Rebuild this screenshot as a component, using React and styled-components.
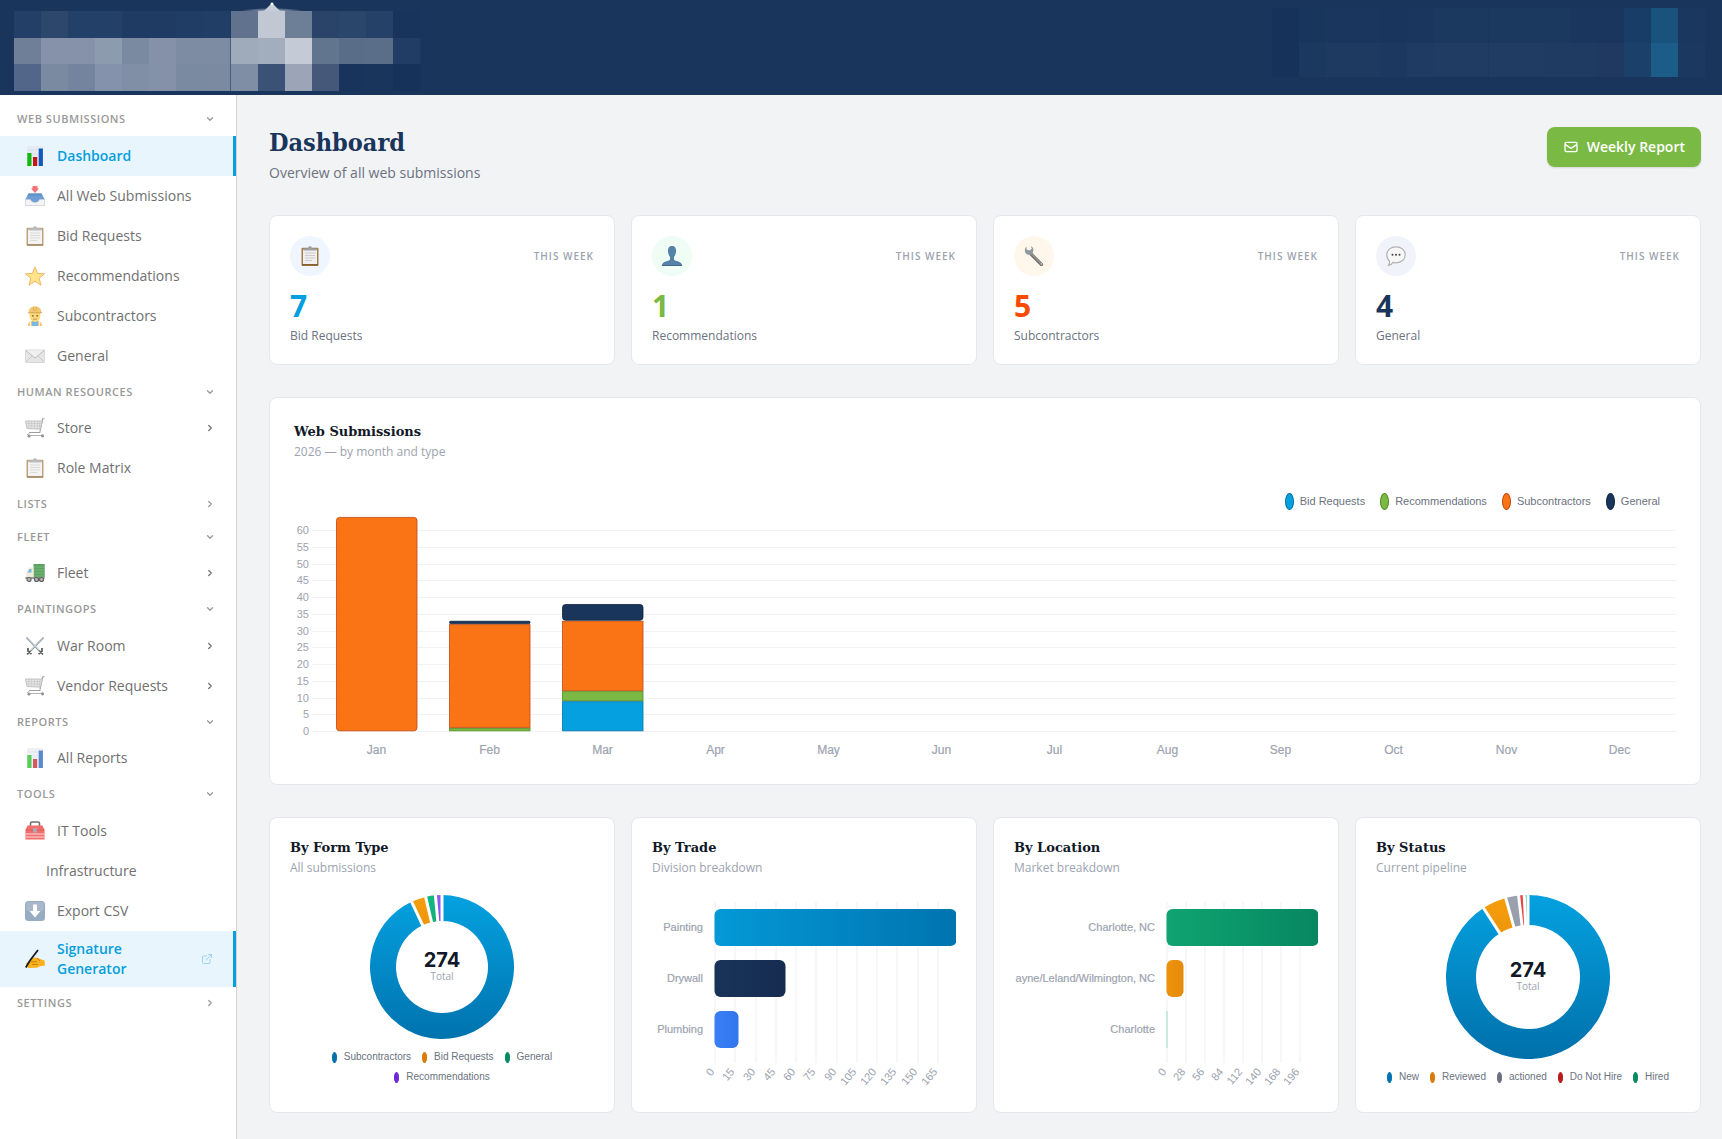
import React from "react";
import styled, { createGlobalStyle, css } from "styled-components";
import { ChevronDown, ChevronRight, ExternalLink } from "lucide-react";

const GlobalStyle = createGlobalStyle`
  :root {
    --navy: #19355c;
    --blue: #00a0df;
    --green: #7ab944;
    --muted: #9ca3af;
    --line: #e5e7eb;
    --sans: "Open Sans", "Noto Sans", sans-serif;
    --chart: "Liberation Sans", Arial, sans-serif;
  }

  *, *::before {
    box-sizing: border-box;
  }

  body {
    margin: 0;
    background: #f2f3f5;
    font-family: var(--sans);
    color: #111827;
  }

  h1, h2, p {
    margin: 0;
  }
`;

const Header = styled.header`
  display: flex;
  justify-content: space-between;
  height: 95px;
  background: var(--navy);
  overflow: hidden;
`;

const Layout = styled.div`
  display: flex;
  min-height: calc(100vh - 95px);
`;

const Sidebar = styled.nav`
  flex: 0 0 237px;
  padding-top: 8px;
  background: #fff;
  border-right: 1px solid #d6d3d0;
`;

const SectionButton = styled.button`
  display: flex;
  align-items: center;
  justify-content: space-between;
  width: 100%;
  padding: 8px 21px 8px 17px;
  border: 0;
  background: none;
  color: #999;
  font-family: inherit;
  font-size: 11px;
  font-weight: 600;
  line-height: 1.5;
  letter-spacing: 0.05em;
  text-transform: uppercase;
`;

const NavLink = styled.a`
  display: flex;
  align-items: center;
  gap: 11px;
  min-height: 40px;
  padding: 8px 18px 8px ${({ $indent }) => ($indent ? 46 : 24)}px;
  border-right: 3px solid transparent;
  color: #707070;
  font-size: 14px;
  line-height: 20px;
  text-decoration: none;

  ${({ $active }) =>
    $active &&
    css`
      background: #e9f5fc;
      border-right-color: #059fdd;
      color: #059fdd;
      font-weight: 600;
    `}
`;

const NavIcon = styled.span`
  display: flex;
  justify-content: center;
  flex: 0 0 22px;
  opacity: ${({ $active }) => ($active ? 1 : 0.7)};
`;

const NavLabel = styled.span`
  flex: 1;
`;

const OpenIcon = styled(ExternalLink)`
  margin-right: 2px;
  color: #9fd4f0;
`;

const Main = styled.main`
  flex: 1;
  min-width: 0;
  padding: 32px 21px 24px 32px;
`;

const PageHead = styled.div`
  display: flex;
  justify-content: space-between;
  align-items: flex-start;
`;

const Title = styled.h1`
  font-family: "DejaVu Serif Condensed", "DejaVu Serif", serif;
  font-size: 25px;
  line-height: 32px;
  color: var(--navy);
`;

const Subtitle = styled.p`
  margin-top: 4px;
  font-size: 14px;
  line-height: 20px;
  color: #6b7280;
`;

const ReportButton = styled.button`
  display: flex;
  align-items: center;
  gap: 8px;
  height: 40px;
  padding: 0 16px;
  border: 0;
  border-radius: 8px;
  background: var(--green);
  box-shadow: 0 1px 2px rgba(0, 0, 0, 0.12);
  color: #fff;
  font-family: inherit;
  font-size: 14px;
  font-weight: 600;
  line-height: 20px;
`;

const CardGrid = styled.section`
  display: grid;
  grid-template-columns: repeat(4, minmax(0, 1fr));
  gap: 16px;
  margin-top: 32px;
`;

const Card = styled.article`
  padding: ${({ $wide }) => ($wide ? 24 : 20)}px;
  background: #fff;
  border: 1px solid var(--line);
  border-radius: 8px;
`;

const WideCard = styled(Card)`
  margin-top: 32px;
`;

const StatTop = styled.div`
  display: flex;
  align-items: center;
  justify-content: space-between;
`;

const StatIcon = styled.span`
  display: flex;
  align-items: center;
  justify-content: center;
  width: 40px;
  height: 40px;
  border-radius: 50%;
  background: ${({ $bg }) => $bg};
`;

const Period = styled.span`
  font-size: 10px;
  font-weight: 600;
  letter-spacing: 1px;
  text-transform: uppercase;
  color: var(--muted);
`;

const StatValue = styled.p`
  margin-top: 14px;
  font-size: 30px;
  font-weight: 700;
  line-height: 32px;
  color: ${({ $color }) => $color};
`;

const StatLabel = styled.p`
  margin-top: 4px;
  font-size: 12px;
  line-height: 20px;
  margin-bottom: -2px;
  color: #6b7280;
`;

const CardTitle = styled.h2`
  font-family: "DejaVu Serif", serif;
  font-size: 13px;
  line-height: 20px;
`;

const CardNote = styled.p`
  font-size: 12px;
  line-height: 20px;
  color: var(--muted);
`;

const Chart = styled.svg`
  display: block;
  width: 100%;
  height: auto;
  font-family: var(--chart);
  font-size: 11px;
  fill: var(--muted);
`;

const SmallChart = styled(Chart)`
  margin-top: 6px;
`;

const DonutChart = styled.svg`
  display: block;
  margin: 17px auto 8px;
`;

const Legend = styled.ul`
  display: flex;
  flex-wrap: wrap;
  justify-content: ${({ $end }) => ($end ? "flex-end" : "center")};
  column-gap: ${({ $end }) => ($end ? 15 : 11)}px;
  margin: ${({ $end }) => ($end ? "29px 16px 0 0" : "0 auto")};
  padding: 0;
  max-width: ${({ $max }) => ($max ? `${$max}px` : "none")};
  list-style: none;
  font-family: var(--chart);
  font-size: ${({ $end }) => ($end ? 11 : 10)}px;
  line-height: 20px;
  color: #6b7280;
`;

const LegendItem = styled.li`
  display: flex;
  align-items: center;
  gap: ${({ $large }) => ($large ? 6 : 7)}px;
  white-space: nowrap;

  &::before {
    content: "";
    width: ${({ $large }) => ($large ? 9 : 5)}px;
    height: ${({ $large }) => ($large ? 17 : 11)}px;
    border: 1px solid ${({ $border, $color }) => $border || $color};
    border-radius: 50%;
    background: ${({ $color }) => $color};
  }
`;

const icons = {
  bars: (
    <>
      <rect x="2" y="0" width="16" height="20" fill="#e6eaf2" />
      <path d="M2 4h16M2 8h16M2 12h16M2 16h16" stroke="#ccd5e6" strokeWidth=".5" />
      <rect x="2.3" y="7" width="4.200" height="13" fill="#14b814" />
      <rect x="8" y="11" width="4.200" height="9" fill="#c01616" />
      <rect x="13.7" y="2.500" width="4.200" height="17.500" fill="#1558bd" />
    </>
  ),
  clipboard: (
    <>
      <rect x="1.5" y="1.700" width="17" height="18.300" rx="1" fill="#a67c45" />
      <rect x="3" y="3.500" width="14" height="14.500" fill="#efefef" />
      <path d="M5 7h10M5 9.500h10M5 12h10M5 14.500h7" stroke="#ccc" strokeWidth="1.200" />
      <path d="M3.500 4.500V2.500h4L9 .3h2l1.500 2.200h4v2z" fill="#9ea1a8" />
      <path d="M2 18.800h16" stroke="#7b5a2c" strokeWidth="1.200" />
    </>
  ),
  cart: (
    <>
      <path d="M19.500.8h-1.800L14.800 14.500H4" fill="none" stroke="#777" strokeWidth="1.100" />
      <path d="M.5 3h16.800l-1.900 8.200L2 10.500z" fill="#ddd" stroke="#999" strokeWidth=".8" />
      <path
        d="M3.500 3l.6 7.500M6.500 3l.3 7.600M9.500 3v7.800M12.500 3l-.3 8M15 3l-.7 8M1 5.500h15.500M1.500 8h14.500"
        stroke="#aaa"
        strokeWidth=".6"
      />
      <path d="M2 17l3-2.500M3 17.500h14" stroke="#888" strokeWidth=".9" />
      <circle cx="4" cy="18" r="1.600" fill="#666" />
      <circle cx="17.500" cy="17.800" r="1.600" fill="#666" />
    </>
  ),
  inbox: (
    <>
      <path d="M3.500 7.500h13l3.200 6v6H.3v-6z" fill="#2f74c2" />
      <path d="M3.500 7.500h13l1 2h-15z" fill="#2560a3" />
      <path d="M.3 13.500h5.200c.8 2.200 2.300 3 4.500 3s3.700-.8 4.500-3h5.200v6H.3z" fill="#f1f1f1" stroke="#bdbdbd" strokeWidth=".5" />
      <path d="M7.500 0h5v2.500h1.500L10 7 6 2.500h1.500z" fill="#f0393f" />
    </>
  ),
  star: (
    <path
      d="M10 .8l2.600 6.600 6.900.4-5.300 4.500 1.800 6.900-6-3.900-6 3.900 1.800-6.900L.5 7.800l6.900-.4z"
      fill="#ffd95a"
      stroke="#e8992c"
      strokeWidth="1"
    />
  ),
  worker: (
    <>
      <path d="M3 20c0-4 3-5.200 7-5.200s7 1.200 7 5.200z" fill="#f4a629" />
      <path d="M7 15h6v5H7z" fill="#3f9bd6" />
      <path d="M5.500 15.500V20M14.500 15.500V20" stroke="#e8eef2" strokeWidth="1.200" />
      <ellipse cx="10" cy="9.500" rx="5.500" ry="6.500" fill="#ffc93c" />
      <path d="M3.500 7C3.500 2.300 6.500.2 10 .2S16.500 2.300 16.500 7z" fill="#eeb030" />
      <path d="M3 6.800h14" stroke="#b97f17" strokeWidth="1" />
      <path d="M8.500 1v3h3V1" fill="none" stroke="#c98a1b" strokeWidth=".8" />
      <circle cx="7.800" cy="9.800" r=".9" fill="#3b2510" />
      <circle cx="12.200" cy="9.800" r=".9" fill="#3b2510" />
      <path d="M8 13.200h4" stroke="#a3591c" strokeWidth=".9" />
    </>
  ),
  envelope: (
    <>
      <rect x=".4" y="4" width="19.200" height="12.500" rx=".8" fill="#dcdcdf" stroke="#bcbdc2" strokeWidth=".8" />
      <path d="M.8 16l6.700-6.500M19.200 16l-6.700-6.500" stroke="#aaa" strokeWidth=".8" />
      <path d="M.6 4.300L10 12l9.400-7.700" fill="#ebebeb" stroke="#999" strokeWidth=".9" />
    </>
  ),
  truck: (
    <>
      <rect x="8.500" y="1" width="11.200" height="13.500" fill="#177d1f" />
      <path d="M9 4h10.500M9 7h10.500M9 10h10.500M9 13h10.500" stroke="#4da250" strokeWidth=".7" />
      <path d="M8.500 4.500H4.200L1.500 9 .5 15h8z" fill="#ece3cd" />
      <path d="M6.500 6H4.300L2.500 9.500h4z" fill="#3aa0d8" />
      <path d="M.5 15h19" stroke="#444" strokeWidth="1.600" />
      {[4, 11.5, 16.5].map((x) => (
        <circle key={x} cx={x} cy="16.500" r="2" fill="#999" stroke="#222" strokeWidth="1.200" />
      ))}
    </>
  ),
  swords: (
    <>
      <path d="M1.500 1.500L14.500 15M18.500 1.500L5.500 15" stroke="#5d6c74" strokeWidth="1.800" />
      <path d="M2 1.500l12 12.500M18 1.500L6 14" stroke="#c9e9f4" strokeWidth=".7" />
      <path
        d="M3 12v3.200l3.500 2.800M17 12v3.200L13.500 18M5.500 15L2 18.500M14.500 15l3.500 3.500"
        fill="none"
        stroke="#111"
        strokeWidth="1.700"
      />
    </>
  ),
  toolbox: (
    <>
      <path d="M5.500 6V2.500Q5.500 1 7 1h6q1.500 0 1.500 1.500V6" fill="none" stroke="#333" strokeWidth="1.600" />
      <path d="M2.500 4.500h15L19.500 9v9.500H.5V9z" fill="#f0302c" />
      <path d="M.5 9h19" stroke="#b51b1b" strokeWidth=".7" />
      <path d="M1 13h18M1 16h18" stroke="#f4d4d2" strokeWidth="1.100" />
      <rect x="8.200" y="7" width="3.600" height="4.500" fill="#889" />
    </>
  ),
  download: (
    <>
      <rect width="20" height="20" rx="3.500" fill="#6c8aaa" />
      <rect x="1" y="1" width="18" height="9" rx="3" fill="#829bb6" />
      <path d="M8 3.500h4v6.500h3.500L10 16.500 4.500 10H8z" fill="#fff" />
    </>
  ),
  writing: (
    <>
      <path d="M1 14.500L8 9l4-.5 3 1.500 4.500 1.500.5 5-5 .8-3 1.500-9 .2-.5-1.500z" fill="#f8b21d" />
      <path d="M6 13l6-.5M7 15.500h6M12 9l3 3" fill="none" stroke="#c77b0c" strokeWidth=".9" />
      <path d="M.8 18.500L5 11.500 13 1" fill="none" stroke="#1b1b1f" strokeWidth="1.800" />
    </>
  ),
  person: (
    <>
      <path
        d="M10 0c3.200 0 4.200 2.500 4 5.500-.2 2.500-1.200 4.500-2 5.500v2.500c1 2 7.500 1.700 8 5.500v1H0v-1c.5-3.800 7-3.500 8-5.500V11C7.200 10 6.200 8 6 5.500 5.800 2.500 6.800 0 10 0z"
        fill="#5681a8"
      />
      <path d="M0 19.500h20" stroke="#42678b" />
    </>
  ),
  wrench: (
    <>
      <path d="M6.500 7.500l11 11" stroke="#73706e" strokeWidth="3.200" strokeLinecap="round" />
      <path d="M6.500 7l11 11" stroke="#b4b2b0" strokeWidth="1" />
      <path d="M2.500.5v3l3 1L8 2.500 6.500.3C9 .8 10 3 9 6S6 9.500 3.500 8.500-.5 4 2.500.5z" fill="#8d989f" />
      <circle cx="17.500" cy="18" r=".8" fill="#ddd" />
    </>
  ),
  speech: (
    <>
      <path
        d="M10 .8c5.500 0 9.200 3.500 9.200 8s-3.700 8-9.200 8c-1 0-2-.2-3-.4-1 1.700-2.600 2.800-4.500 3 1-1.400 1.200-2.800 1-4.200C1.800 13.800.8 11.500.8 8.800c0-4.500 3.700-8 9.200-8z"
        fill="#f7f7f7"
        stroke="#b2b2b2"
        strokeWidth="1.200"
      />
      {[6.5, 10, 13.5].map((x) => (
        <circle key={x} cx={x} cy="8.800" r="1" fill="#444" />
      ))}
    </>
  ),
};

const Emoji = ({ name, size = 20 }) => (
  <svg width={size} height={size} viewBox="0 0 20 20" aria-hidden="true">
    {icons[name]}
  </svg>
);

const logoRows = [
  ["#233f68", "#2d466c", "#234069", "#234069", "#1f3b63", "#1f3b63", "#203d65", "#213e66", "#60728d", "#c2c7d4", "#6c7f97", "#2a4469", "#2b466b", "#264167", "#18345c"],
  ["#6f7f98", "#8592aa", "#8592a9", "#8d9bae", "#7a8aa0", "#8491a9", "#7d8ca2", "#7d8ca2", "#9faaba", "#a2adbe", "#c5cbd6", "#62758f", "#596d88", "#5a6e89", "#213d65"],
  ["#52668a", "#7a8aa1", "#74849e", "#8592ab", "#808ea6", "#8491a9", "#7a8aa0", "#7b8aa0", "#808ea5", "#3a5275", "#9ca5b8", "#45587a", "#18345c", "#19355c", "#17325a"],
];

const accountRows = [
  ["#16325a", "#18365c", "#1a365e", "#1a365e", "#19355e", "#1a365f", "#1b385e", "#1b385e", "#1b385e", "#1b385e", "#1b385e", "#1a365e", "#1a365f", "#183e68", "#1a527e", "#19375f"],
  ["#16325a", "#1b395f", "#1e3a60", "#1e3a60", "#1c3860", "#1f3b63", "#203c63", "#203c63", "#203c63", "#203c63", "#1f3b61", "#1f3b61", "#1f3960", "#1b416b", "#1c5c89", "#1a3860"],
];

const Mosaic = ({ width, rows, left, top, cell, children }) => (
  <svg width={width} height="95" viewBox={`0 0 ${width} 95`} aria-hidden="true">
    {rows.map((row, y) =>
      row.map((fill, x) => (
        <rect
          key={`${x}-${y}`}
          x={Math.round(left + x * 27.07)}
          y={Math.round(top + y * cell)}
          width="27.500"
          height={Math.round(top + (y + 1) * cell) - Math.round(top + y * cell)}
          fill={fill}
        />
      ))
    )}
    {children}
  </svg>
);

const menu = [
  {
    title: "Web Submissions",
    open: true,
    items: [
      { icon: "bars", label: "Dashboard", active: true },
      { icon: "inbox", label: "All Web Submissions" },
      { icon: "clipboard", label: "Bid Requests" },
      { icon: "star", label: "Recommendations" },
      { icon: "worker", label: "Subcontractors" },
      { icon: "envelope", label: "General" },
    ],
  },
  {
    title: "Human Resources",
    open: true,
    items: [
      { icon: "cart", label: "Store", more: true },
      { icon: "clipboard", label: "Role Matrix" },
    ],
  },
  { title: "Lists", items: [] },
  { title: "Fleet", open: true, items: [{ icon: "truck", label: "Fleet", more: true }] },
  {
    title: "PaintingOps",
    open: true,
    items: [
      { icon: "swords", label: "War Room", more: true },
      { icon: "cart", label: "Vendor Requests", more: true },
    ],
  },
  { title: "Reports", open: true, items: [{ icon: "bars", label: "All Reports" }] },
  {
    title: "Tools",
    open: true,
    items: [
      { icon: "toolbox", label: "IT Tools" },
      { label: "Infrastructure" },
      { icon: "download", label: "Export CSV" },
      { icon: "writing", label: "Signature Generator", active: true, external: true },
    ],
  },
  { title: "Settings", items: [] },
];

const stats = [
  { icon: "clipboard", value: 7, label: "Bid Requests", color: "#00a0df", bg: "#eff6ff" },
  { icon: "person", value: 1, label: "Recommendations", color: "#7ab944", bg: "#effdf4" },
  { icon: "wrench", value: 5, label: "Subcontractors", color: "#f74b00", bg: "#fff7eb" },
  { icon: "speech", value: 4, label: "General", color: "#19355c", bg: "#f0f3f9" },
];

const series = [
  { label: "Bid Requests", color: "#04a0df", border: "#0370a8" },
  { label: "Recommendations", color: "#7ab944", border: "#4f8a1c" },
  { label: "Subcontractors", color: "#fa7415", border: "#c2460c" },
  { label: "General", color: "#19355c", border: "#10233f" },
];

const months = ["Jan", "Feb", "Mar", "Apr", "May", "Jun", "Jul", "Aug", "Sep", "Oct", "Nov", "Dec"];

// submissions per month, in the order of `series`
const monthly = [
  [0, 0, 64, 0],
  [0, 1, 31, 1],
  [9, 3, 21, 5],
];

const formTypes = [
  { label: "Subcontractors", value: 255, from: "#04a1e0", to: "#0073ae", key: "#0073ae" },
  { label: "Bid Requests", value: 9, from: "#f59e0b", to: "#ee960c", key: "#d97b06" },
  { label: "General", value: 6, from: "#10b981", to: "#13ae7c", key: "#078a60" },
  { label: "Recommendations", value: 4, from: "#8b5cf6", to: "#8352f0", key: "#6d28d9" },
];

const statuses = [
  { label: "New", value: 249, from: "#04a1e0", to: "#0070aa", key: "#0073ae" },
  { label: "Reviewed", value: 13, from: "#f59e0b", to: "#ee960c", key: "#d97b06" },
  { label: "actioned", value: 7, from: "#9ca3af", to: "#949baa", key: "#6b7280" },
  { label: "Do Not Hire", value: 3, from: "#ef4444", to: "#e63c3c", key: "#b91c1c" },
  { label: "Hired", value: 2, from: "#10b981", to: "#13ae7c", key: "#078a60" },
];

const MonthlyChart = () => {
  const zero = 220;
  const unit = 201 / 60;

  return (
    <Chart viewBox="0 0 1382 249" role="img" aria-label="Submissions by month and type">
      {Array.from({ length: 13 }, (_, i) => {
        const y = Math.round(zero - i * 5 * unit);
        return (
          <g key={i}>
            <rect x="18" y={y} width="1364" height="1" fill="#f1f2f4" />
            <text x="15" y={y + 4} textAnchor="end">
              {i * 5}
            </text>
          </g>
        );
      })}
      {monthly.map((values, m) => {
        let total = 0;
        return values.map((value, s) => {
          if (!value) return null;
          total += value;
          return (
            <rect
              key={`${m}-${s}`}
              x={42.5 + m * 113}
              y={zero - total * unit + 0.8}
              width="80.5"
              height={value * unit - 1}
              rx={s === 3 || m === 0 ? Math.min(3, value) : 0}
              fill={series[s].color}
              stroke={series[s].border}
              strokeOpacity=".8"
            />
          );
        });
      })}
      {months.map((month, i) => (
        <text key={month} x={82.5 + i * 113} y="243" fontSize="12" textAnchor="middle" stroke="#9ca3af" strokeWidth=".2">
          {month}
        </text>
      ))}
    </Chart>
  );
};

const BarChart = ({ id, start, step, ticks, rows }) => (
  <SmallChart viewBox="0 0 304 208" role="img" aria-label={id}>
    {ticks.map((tick, i) => {
      const x = start + Math.round(i * step);
      return (
        <g key={tick}>
          <rect x={x - 0.5} y="18" width="1" height="161" fill="#eff0f3" />
          <text textAnchor="end" transform={`translate(${x} 188) rotate(-50)`}>
            {tick}
          </text>
        </g>
      );
    })}
    {rows.map(({ label, width, from, to }, i) => (
      <g key={label}>
        <linearGradient id={`${id}-${i}`}>
          <stop stopColor={from} />
          <stop offset="1" stopColor={to} />
        </linearGradient>
        <text x={start - 12} y={47 + i * 51} textAnchor="end" stroke="#9ca3af" strokeWidth=".2">
          {label}
        </text>
        <rect x={start - 0.5} y={25 + i * 51} width={width} height="37" rx={width > 1 ? 6 : 0} fill={`url(#${id}-${i})`} />
      </g>
    ))}
  </SmallChart>
);

const Donut = ({ id, data, radius, hole }) => {
  const total = data.reduce((sum, d) => sum + d.value, 0);
  const point = (value, r) => {
    const angle = (value / total) * Math.PI * 2;
    return `${radius + Math.sin(angle) * r} ${radius - Math.cos(angle) * r}`;
  };
  let sum = 0;
  const slices = data.map((d) => {
    const begin = sum;
    sum += d.value;
    return { ...d, begin, end: sum, large: d.value > total / 2 ? 1 : 0 };
  });

  return (
    <DonutChart width={radius * 2} height={radius * 2} role="img" aria-label={id}>
      {slices.map(({ label, begin, end, large, from, to }, i) => (
        <g key={label}>
          <linearGradient id={`${id}-${i}`} x2="0" y2="1">
            <stop stopColor={from} />
            <stop offset="1" stopColor={to} />
          </linearGradient>
          <path
            fill={`url(#${id}-${i})`}
            d={`M${point(begin, radius)}A${radius} ${radius} 0 ${large} 1 ${point(end, radius)}L${point(end, hole)}A${hole} ${hole} 0 ${large} 0 ${point(begin, hole)}Z`}
          />
        </g>
      ))}
      {slices.map(({ label, begin }) => (
        <path key={label} d={`M${point(begin, hole - 1)}L${point(begin, radius + 1)}`} stroke="#fff" strokeWidth="3" />
      ))}
      <text x={radius} y={radius} textAnchor="middle" fontFamily="Inter, sans-serif" fontSize="20" fontWeight="700" fill="#111827">
        {total}
      </text>
      <text x={radius} y={radius + 13} textAnchor="middle" fontFamily="Open Sans, sans-serif" fontSize="10" fill="#9ca3af">
        Total
      </text>
    </DonutChart>
  );
};

const CardHead = ({ title, note }) => (
  <>
    <CardTitle>{title}</CardTitle>
    <CardNote>{note}</CardNote>
  </>
);

const DonutLegend = ({ data, max }) => (
  <Legend $max={max}>
    {data.map(({ label, key }) => (
      <LegendItem key={label} $color={key}>
        {label}
      </LegendItem>
    ))}
  </Legend>
);

const App = () => (
  <>
    <GlobalStyle />
    <Header>
      <Mosaic width={424} rows={logoRows} left={14} top={11} cell={26.7}>
        <radialGradient id="glow" cx=".5" cy="1" r=".5">
          <stop stopColor="#c2c7d4" />
          <stop offset="1" stopColor="#c2c7d4" stopOpacity="0" />
        </radialGradient>
        <rect x="240" y="5" width="64" height="6" fill="url(#glow)" />
        <path d="M272 3l8 8h-16z" fill="#c9cdd8" />
        <circle cx="272" cy="4" r="1.500" fill="#fff" />
      </Mosaic>
      <Mosaic width={454} rows={accountRows} left={4} top={8} cell={34.5} />
    </Header>
    <Layout>
      <Sidebar>
        {menu.map(({ title, open, items }) => (
          <div key={title}>
            <SectionButton type="button">
              {title}
              {open ? <ChevronDown size={10} strokeWidth={3} /> : <ChevronRight size={10} strokeWidth={3} />}
            </SectionButton>
            {items.map(({ icon, label, active, more, external }) => (
              <NavLink key={label} href="#" $active={active} $indent={!icon}>
                {icon && (
                  <NavIcon $active={active}>
                    <Emoji name={icon} />
                  </NavIcon>
                )}
                <NavLabel>{label}</NavLabel>
                {more && <ChevronRight size={10} strokeWidth={3} />}
                {external && <OpenIcon size={12} />}
              </NavLink>
            ))}
          </div>
        ))}
      </Sidebar>
      <Main>
        <PageHead>
          <div>
            <Title>Dashboard</Title>
            <Subtitle>Overview of all web submissions</Subtitle>
          </div>
          <ReportButton type="button">
            <svg
              width="16"
              height="16"
              viewBox="0 0 24 24"
              fill="none"
              stroke="currentColor"
              strokeWidth="2"
              strokeLinecap="round"
              strokeLinejoin="round"
            >
              <path d="M3 8l7.890 5.260a2 2 0 002.220 0L21 8M5 19h14a2 2 0 002-2V7a2 2 0 00-2-2H5a2 2 0 00-2 2v10a2 2 0 002 2z" />
            </svg>
            Weekly Report
          </ReportButton>
        </PageHead>
        <CardGrid>
          {stats.map(({ icon, value, label, color, bg }) => (
            <Card key={label}>
              <StatTop>
                <StatIcon $bg={bg}>
                  <Emoji name={icon} />
                </StatIcon>
                <Period>This week</Period>
              </StatTop>
              <StatValue $color={color}>{value}</StatValue>
              <StatLabel>{label}</StatLabel>
            </Card>
          ))}
        </CardGrid>
        <WideCard $wide>
          <CardHead title="Web Submissions" note="2026 — by month and type" />
          <Legend $end>
            {series.map(({ label, color, border }) => (
              <LegendItem key={label} $large $color={color} $border={border}>
                {label}
              </LegendItem>
            ))}
          </Legend>
          <MonthlyChart />
        </WideCard>
        <CardGrid>
          <Card>
            <CardHead title="By Form Type" note="All submissions" />
            <Donut id="form" data={formTypes} radius={72} hole={46} />
            <DonutLegend data={formTypes} max={260} />
          </Card>
          <Card>
            <CardHead title="By Trade" note="Division breakdown" />
            <BarChart
              id="trade"
              start={63}
              step={20.27}
              ticks={[0, 15, 30, 45, 60, 75, 90, 105, 120, 135, 150, 165]}
              rows={[
                { label: "Painting", width: 242, from: "#0399d7", to: "#0074af" },
                { label: "Drywall", width: 71, from: "#183359", to: "#162c50" },
                { label: "Plumbing", width: 24, from: "#3b7ff5", to: "#3276ee" },
              ]}
            />
          </Card>
          <Card>
            <CardHead title="By Location" note="Market breakdown" />
            <BarChart
              id="location"
              start={153}
              step={19}
              ticks={[0, 28, 56, 84, 112, 140, 168, 196]}
              rows={[
                { label: "Charlotte, NC", width: 152, from: "#0fa471", to: "#078760" },
                { label: "ayne/Leland/Wilmington, NC", width: 17, from: "#ec930b", to: "#e68b0a" },
                { label: "Charlotte", width: 1, from: "#9fdcc6", to: "#9fdcc6" },
              ]}
            />
          </Card>
          <Card>
            <CardHead title="By Status" note="Current pipeline" />
            <Donut id="status" data={statuses} radius={82} hole={52} />
            <DonutLegend data={statuses} />
          </Card>
        </CardGrid>
      </Main>
    </Layout>
  </>
);

export default App;
